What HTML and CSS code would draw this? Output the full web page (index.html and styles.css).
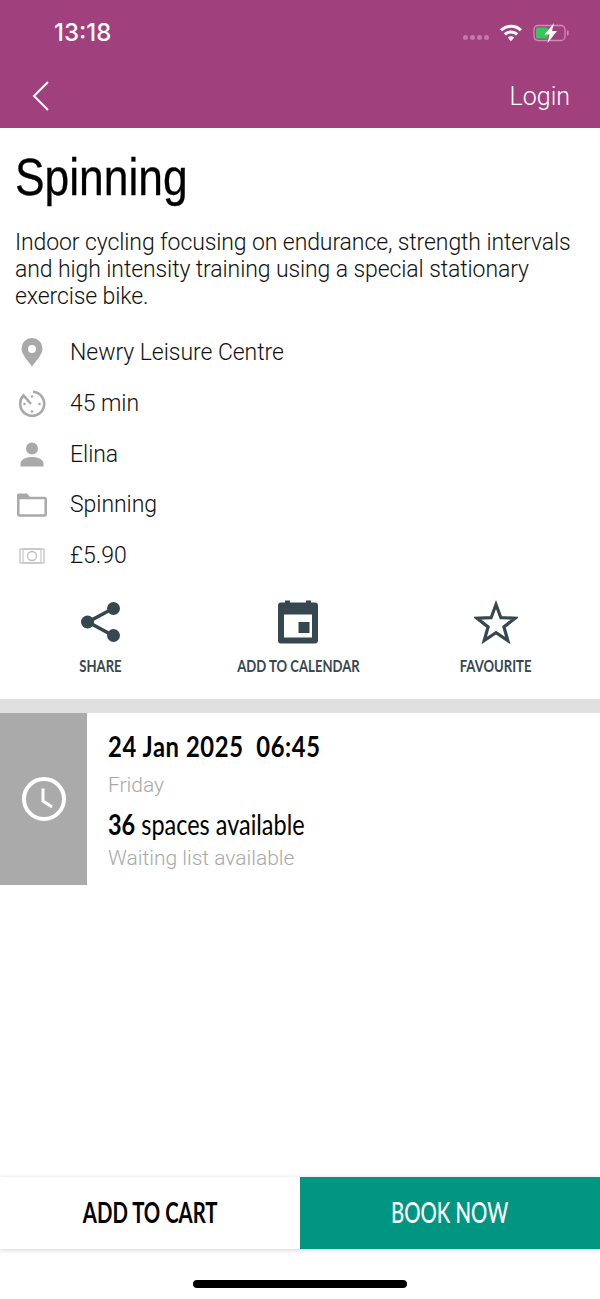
FILE: index.html
```html
<!DOCTYPE html>
<html lang="en">
<head>
<meta charset="utf-8">
<title>Spinning</title>
<link rel="stylesheet" href="styles.css">
</head>
<body>
<div class="app">
  <header class="header">
    <div class="status">
      <span class="time">13:18</span>
      <div class="status-icons">
        <span class="dots"><i></i><i></i><i></i><i></i></span>
        <svg class="wifi" width="24" height="20" viewBox="0 0 22 18"><path d="M11 16.500 8 13.200a4.200 4.200 0 0 1 6 0Z" fill="#fff"/><path d="M5.300 10.300a8.200 8.200 0 0 1 11.400 0M1.900 6.500a13 13 0 0 1 18.200 0" fill="none" stroke="#fff" stroke-width="2.800"/></svg>
        <svg class="battery" width="37" height="20" viewBox="0 0 37 20"><rect x="1" y="2.500" width="31" height="15" rx="4" fill="none" stroke="#d08cb8" stroke-width="1.300"/><rect x="34" y="7.500" width="1.500" height="5" rx=".7" fill="#d08cb8"/><rect x="3" y="4.500" width="12" height="11" rx="1.500" fill="#34c759"/><path d="M21 0 11.500 11.500H16.500L14.500 20 24 8H19Z" fill="#fff"/></svg>
      </div>
    </div>
    <nav class="nav">
      <svg width="20" height="32" viewBox="0 0 20 32"><path d="M17 2 3 16l14 14" fill="none" stroke="#fff" stroke-width="2"/></svg>
      <span class="login">Login</span>
    </nav>
  </header>

  <main class="main">
    <section class="intro">
      <h1 class="title"><span class="squeeze-title">Spinning</span></h1>
      <p class="desc">Indoor cycling focusing on endurance, strength intervals and high intensity training using a special stationary exercise bike.</p>
      <ul class="facts">
        <li class="fact">
          <span class="fact-icon"><svg width="22" height="29" viewBox="0 0 22 29"><path fill-rule="evenodd" d="M11 0a10.500 10.500 0 0 1 10.500 10.500C21.500 17 14 24 11 28.500 8 24 .5 17 .5 10.500A10.500 10.500 0 0 1 11 0Zm0 7a4 4 0 1 0 0 8 4 4 0 0 0 0-8Z" fill="#a9a9a9"/></svg></span>
          <span>Newry Leisure Centre</span>
        </li>
        <li class="fact">
          <span class="fact-icon"><svg width="28" height="28" viewBox="0 0 28 28"><path d="M15 1.800A12 12 0 1 1 5.500 5.500L13 14" fill="none" stroke="#a9a9a9" stroke-width="2.600"/><circle cx="14" cy="6.500" r="1.200" fill="#a9a9a9"/><circle cx="21.500" cy="14" r="1.300" fill="#a9a9a9"/><circle cx="14" cy="21.500" r="1.300" fill="#a9a9a9"/><circle cx="6.500" cy="14" r="1.300" fill="#a9a9a9"/></svg></span>
          <span>45 min</span>
        </li>
        <li class="fact">
          <span class="fact-icon"><svg width="26" height="25" viewBox="0 0 26 25"><circle cx="13" cy="6.500" r="6" fill="#a9a9a9"/><path d="M1.500 24.500v-3c0-4.500 7-6.500 11.500-6.500s11.500 2 11.500 6.500v3Z" fill="#a9a9a9"/></svg></span>
          <span>Elina</span>
        </li>
        <li class="fact">
          <span class="fact-icon"><svg width="30" height="24" viewBox="0 0 30 24"><path d="M1.300 4V21.500a1 1 0 0 0 1 1H27.700a1 1 0 0 0 1-1V6a1 1 0 0 0-1-1H1.500" fill="none" stroke="#a9a9a9" stroke-width="2.500"/><path d="M0 5V2a1.500 1.500 0 0 1 1.500-1.500H10l3 3.500V6H0Z" fill="#a9a9a9"/></svg></span>
          <span>Spinning</span>
        </li>
        <li class="fact">
          <span class="fact-icon"><svg width="26" height="18" viewBox="0 0 26 18"><rect x="1" y="2" width="24" height="14" fill="none" stroke="#bdbdbd" stroke-width="1.200"/><rect x="4" y="2" width="18" height="14" fill="none" stroke="#bdbdbd" stroke-width="1"/><circle cx="13" cy="9" r="4.500" fill="none" stroke="#bdbdbd" stroke-width="1.300"/></svg></span>
          <span>£5.90</span>
        </li>
      </ul>
    </section>

    <section class="actions">
      <div class="action">
        <svg width="42" height="46" viewBox="-1 0 42 46"><path d="M33 9.500 8 23l25 13.500" fill="none" stroke="#36474f" stroke-width="3.600"/><circle cx="33.500" cy="9.500" r="6.500" fill="#36474f"/><circle cx="7.500" cy="23" r="6.500" fill="#36474f"/><circle cx="33.500" cy="36.500" r="6.500" fill="#36474f"/></svg>
        <span class="action-label">SHARE</span>
      </div>
      <div class="action">
        <svg width="42" height="46" viewBox="0 0 42 46"><path fill-rule="evenodd" d="M8 1.500h5V3.500H29V1.500h5V3.500h4a3 3 0 0 1 3 3V41.500a3 3 0 0 1-3 3H4a3 3 0 0 1-3-3V6.500a3 3 0 0 1 3-3H8ZM7 15.500V38.500H35V15.500Z" fill="#36474f"/><rect x="21.500" y="23" width="11" height="11" fill="#36474f"/></svg>
        <span class="action-label">ADD TO CALENDAR</span>
      </div>
      <div class="action">
        <svg width="44" height="46" viewBox="0 0 44 46"><path d="M22 5.500 26.900 18.700 41 19.200 29.900 27.900 33.800 41.500 22 33.600 10.200 41.500 14.100 27.900 3 19.200 17.100 18.700Z" fill="none" stroke="#36474f" stroke-width="3.200"/></svg>
        <span class="action-label">FAVOURITE</span>
      </div>
    </section>

    <div class="band"></div>

    <section class="session">
      <div class="session-side">
        <svg width="46" height="46" viewBox="0 0 46 46"><circle cx="23" cy="23" r="20" fill="none" stroke="#fff" stroke-width="4"/><path d="M22 12.500V25l9 6" fill="none" stroke="#fff" stroke-width="3"/></svg>
      </div>
      <div class="session-body">
        <div class="session-date">24 Jan 2025&nbsp; 06:45</div>
        <div class="session-muted day">Friday</div>
        <div class="session-spaces"><b>36</b> spaces available</div>
        <div class="session-muted wait">Waiting list available</div>
      </div>
    </section>
  </main>

  <footer class="footer">
    <div class="buttons">
      <button class="btn btn-cart"><span class="btn-text">ADD TO CART</span></button>
      <button class="btn btn-book"><span class="btn-text">BOOK NOW</span></button>
    </div>
    <div class="home-bar"></div>
  </footer>
</div>
</body>
</html>
```
FILE: styles.css
```css
* { box-sizing: border-box; }
html, body { margin: 0; padding: 0; }
body { background: #fff; font-family: Roboto, "Liberation Sans", sans-serif; color: #111; }
.app { width: 600px; height: 1299px; display: flex; flex-direction: column; overflow: hidden; }

.header { height: 128px; background: #a0417e; color: #fff; display: flex; flex-direction: column; flex: none; }
.status { height: 64px; display: flex; align-items: center; justify-content: space-between; padding: 2px 30px 0 54px; }
.time { font: 500 24px/1 Inter, sans-serif; }
.status-icons { display: flex; align-items: center; gap: 10px; }
.dots { display: flex; gap: 2px; margin-top: 8px; margin-right: 0; }
.dots i { width: 5px; height: 5px; border-radius: 50%; background: #c378a8; }
.nav { flex: 1; display: flex; justify-content: space-between; align-items: center; padding: 0 30px 0 31px; }
.login { font: 300 25px/1 Roboto, sans-serif; }

.main { flex: 1; display: flex; flex-direction: column; }
.intro { padding: 21px 15px 0; }
.title { margin: 0; font: 400 52px/56px "Liberation Sans", sans-serif; color: #000; }
.squeeze-title { display: inline-block; transform: scaleX(.853); transform-origin: left center; -webkit-text-stroke: .3px #000; }
.desc { margin: 24px 0 0; font: 300 23px/27px Roboto, sans-serif; color: #111; letter-spacing: -.1px; }
.facts { list-style: none; margin: 17.500px 0 0; padding: 0; }
.fact { height: 50.700px; display: flex; align-items: center; font: 300 23px/1 Roboto, sans-serif; letter-spacing: -.05px; }
.fact-icon { width: 55px; flex: none; display: flex; justify-content: center; padding-right: 21px; }

.actions { display: grid; grid-template-columns: 200px 196px 200px; margin-top: 18.500px; height: 100px; }
.action { display: flex; flex-direction: column; align-items: center; gap: 11px; }
.action-label { font: 700 17px/20px Lato, sans-serif; color: #36474f; white-space: nowrap; transform: scaleX(.77); }

.band { height: 14px; background: #e0e0e0; flex: none; }
.session { display: flex; height: 172px; }
.session-side { width: 87px; background: #aaa; display: flex; align-items: center; justify-content: center; }
.session-body { padding: 16px 0 0 21px; }
.session-date, .session-spaces { font: 700 28px/34px Lato, sans-serif; color: #000; white-space: nowrap; transform: scaleX(.85); transform-origin: left center; }
.session-date { letter-spacing: .7px; }
.session-muted { font: 300 21px/26px Roboto, sans-serif; color: #a8a8a8; }
.day { margin-top: 9px; }
.session-spaces { margin-top: 9px; font-weight: 400; transform: scaleX(.838); }
.session-spaces b { font-weight: 700; }
.wait { margin-top: 4px; }

.footer { flex: none; height: 122px; }
.buttons { display: flex; height: 72px; box-shadow: 0 1px 5px rgba(0,0,0,.18); }
.btn { width: 50%; border: 0; padding: 0 0 3px; font: 700 29px/1 Lato, sans-serif; }
.btn-text { display: inline-block; white-space: nowrap; transform: scaleX(.7); }
.btn-cart { background: #fff; color: #000; }
.btn-book { background: #009682; color: #fff; font-weight: 500; }
.home-bar { width: 214px; height: 8px; background: #000; border-radius: 4px; margin: 31px auto 0; }
```
